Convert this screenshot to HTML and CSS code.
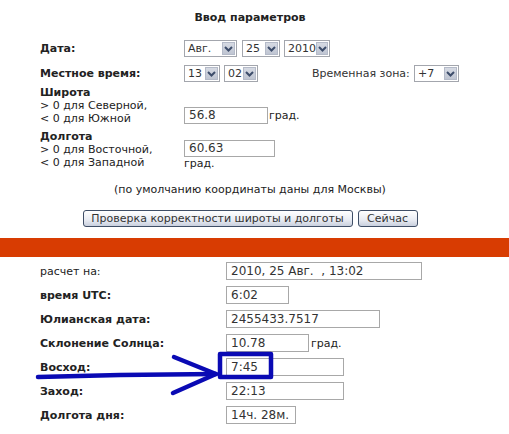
FILE: index.html
```html
<!DOCTYPE html>
<html>

<head>
    <title>Восход и заход Солнца</title>
    <meta charset="utf-8">
    <link rel="stylesheet" href="styles.css">
</head>

<body>
    <div class="page">
        <div class="params">
            <div class="title">Ввод параметров</div>

            <div class="row row-date">
                <div class="lbl bold">Дата:</div>
                <div class="val">
                    <span class="sel sel-mon"><span class="sel-v">Авг.</span><span class="sel-a"><svg width="9" height="6" viewBox="0 0 9 6"><path d="M1 1 L4.5 4.5 L8 1" /></svg></span></span>
                    <span class="sel sel-day"><span class="sel-v">25</span><span class="sel-a"><svg width="9" height="6" viewBox="0 0 9 6"><path d="M1 1 L4.5 4.5 L8 1" /></svg></span></span>
                    <span class="sel sel-year"><span class="sel-v">2010</span><span class="sel-a"><svg width="9" height="6" viewBox="0 0 9 6"><path d="M1 1 L4.5 4.5 L8 1" /></svg></span></span>
                </div>
            </div>

            <div class="row row-time">
                <div class="lbl bold">Местное время:</div>
                <div class="val">
                    <span class="sel sel-hour"><span class="sel-v">13</span><span class="sel-a"><svg width="9" height="6" viewBox="0 0 9 6"><path d="M1 1 L4.5 4.5 L8 1" /></svg></span></span>
                    <span class="sel sel-min"><span class="sel-v">02</span><span class="sel-a"><svg width="9" height="6" viewBox="0 0 9 6"><path d="M1 1 L4.5 4.5 L8 1" /></svg></span></span>
                    <span class="tz-lbl">Временная зона:</span>
                    <span class="sel sel-tz"><span class="sel-v">+7</span><span class="sel-a"><svg width="9" height="6" viewBox="0 0 9 6"><path d="M1 1 L4.5 4.5 L8 1" /></svg></span></span>
                </div>
            </div>

            <div class="row row-lat">
                <div class="lbl">
                    <b>Широта</b><br>
                    &gt; 0 для Северной,<br>
                    &lt; 0 для Южной
                </div>
                <div class="val">
                    <span class="inp inp-lat">56.8</span>град.
                </div>
            </div>

            <div class="row row-lon">
                <div class="lbl">
                    <b>Долгота</b><br>
                    &gt; 0 для Восточной,<br>
                    &lt; 0 для Западной
                </div>
                <div class="val">
                    <span class="inp inp-lon">60.63</span><br>
                    град.
                </div>
            </div>

            <div class="note">(по умолчанию координаты даны для Москвы)</div>

            <div class="buttons">
                <button class="btn btn-check">Проверка корректности широты и долготы</button>
                <button class="btn btn-now">Сейчас</button>
            </div>
        </div>

        <div class="bar"></div>

        <div class="results">
            <div class="res-row">
                <div class="res-lbl">расчет на:</div>
                <span class="inp w-calc">2010, 25 Авг. &nbsp;, 13:02</span>
            </div>
            <div class="res-row">
                <div class="res-lbl bold">время UTC:</div>
                <span class="inp w-utc">6:02</span>
            </div>
            <div class="res-row">
                <div class="res-lbl bold">Юлианская дата:</div>
                <span class="inp w-jd">2455433.7517</span>
            </div>
            <div class="res-row">
                <div class="res-lbl bold">Склонение Солнца:</div>
                <span class="inp w-decl">10.78</span>град.
            </div>
            <div class="res-row">
                <div class="res-lbl bold">Восход:</div>
                <span class="inp w-rise">7:45</span>
            </div>
            <div class="res-row">
                <div class="res-lbl bold">Заход:</div>
                <span class="inp w-rise">22:13</span>
            </div>
            <div class="res-row">
                <div class="res-lbl bold">Долгота дня:</div>
                <span class="inp w-day">14ч. 28м.</span>
            </div>
        </div>

        <!-- пометка синим поверх страницы -->
        <svg class="mark" width="509" height="434" viewBox="0 0 509 434">
            <rect x="220" y="354" width="51" height="23" />
            <path d="M38 377 L120 375 L216 374" />
            <path d="M174 357 L216 374 L173 393" />
        </svg>
    </div>
</body>

</html>
```

FILE: styles.css
```css
body {
    margin: 0;
    font-family: "DejaVu Sans", Verdana, sans-serif;
    font-size: 11px;
    color: #222;
    background: #fff;
}

.page {
    position: relative;
    width: 509px;
    height: 434px;
    overflow: hidden;
}

.bold {
    font-weight: bold;
}

/* ввод параметров */

.params {
    width: 500px;
}

.title {
    margin-top: 11px;
    line-height: 13px;
    text-align: center;
    font-weight: bold;
}

.row {
    display: flex;
    padding-left: 40px;
}

.row .lbl {
    width: 144px;
    line-height: 13px;
}

.row .val {
    display: flex;
    align-items: center;
}

.row-date {
    margin-top: 16px;
    align-items: center;
    height: 17px;
}

.row-time {
    margin-top: 8px;
    align-items: center;
    height: 17px;
}

.row-lat {
    margin-top: 4px;
    align-items: flex-end;
}

.row-lat .val {
    padding-bottom: 1px;
}

.row-lon {
    margin-top: 5px;
}

.row-lon .val {
    display: block;
    padding-top: 10px;
    line-height: 13px;
}

.sel {
    display: inline-flex;
    align-items: center;
    justify-content: space-between;
    height: 17px;
    box-sizing: border-box;
    border: 1px solid #a3a6ad;
    background: #fff;
    padding: 1px;
    color: #333;
    font-size: 11px;
}

.sel-v {
    padding-left: 2px;
}

.sel-a {
    display: flex;
    align-items: center;
    justify-content: center;
    width: 13px;
    height: 13px;
    box-sizing: border-box;
    border: 1px solid #b4bac8;
    background: linear-gradient(#d6dae3, #bfc5d2);
}

.sel-a path {
    fill: none;
    stroke: #3d4d6b;
    stroke-width: 2;
}

.sel-mon {
    width: 53px;
}

.sel-day {
    width: 38px;
    margin-left: 5px;
}

.sel-year {
    width: 46px;
    margin-left: 4px;
}

.sel-hour {
    width: 36px;
}

.sel-min {
    width: 34px;
    margin-left: 4px;
}

.tz-lbl {
    margin-left: 54px;
    width: 102px;
    color: #333;
}

.sel-tz {
    width: 45px;
}

.inp {
    display: inline-block;
    height: 17px;
    line-height: 15px;
    box-sizing: border-box;
    border: 1px solid #a8a8a8;
    padding-left: 4px;
    color: #333;
    font-size: 12px;
    vertical-align: middle;
}

.inp-lat {
    width: 84px;
    margin-right: 1px;
}

.inp-lon {
    width: 91px;
}

.note {
    margin-top: 13px;
    line-height: 13px;
    text-align: center;
}

.buttons {
    margin-top: 14px;
    display: flex;
    justify-content: center;
    gap: 5px;
}

.btn {
    height: 17px;
    padding: 0 6px;
    border: 1px solid #3f4e66;
    border-radius: 3px;
    background: linear-gradient(#ffffff, #e8ebf2 60%, #c9d0de);
    font-family: "DejaVu Sans", Verdana, sans-serif;
    font-size: 11px;
    color: #333;
    line-height: 13px;
}

.btn-check {
    width: 270px;
}

.btn-now {
    width: 60px;
}

/* результаты */

.bar {
    margin-top: 11px;
    height: 19px;
    background: #d83c02;
}

.results {
    padding: 5px 0 0 40px;
}

.res-row {
    display: flex;
    align-items: center;
    height: 18px;
    margin-bottom: 6px;
}

.res-lbl {
    width: 186px;
}

.results .inp {
    height: 18px;
    line-height: 16px;
}

.w-calc {
    width: 196px;
}

.w-utc {
    width: 63px;
}

.w-jd {
    width: 154px;
}

.w-decl {
    width: 83px;
    margin-right: 2px;
}

.w-rise {
    width: 118px;
}

.w-day {
    width: 70px;
}

.mark {
    position: absolute;
    left: 0;
    top: 0;
    pointer-events: none;
}

.mark rect,
.mark path {
    fill: none;
    stroke: #0a0ab4;
    stroke-width: 4.5;
    stroke-linecap: round;
    stroke-linejoin: round;
}
```
